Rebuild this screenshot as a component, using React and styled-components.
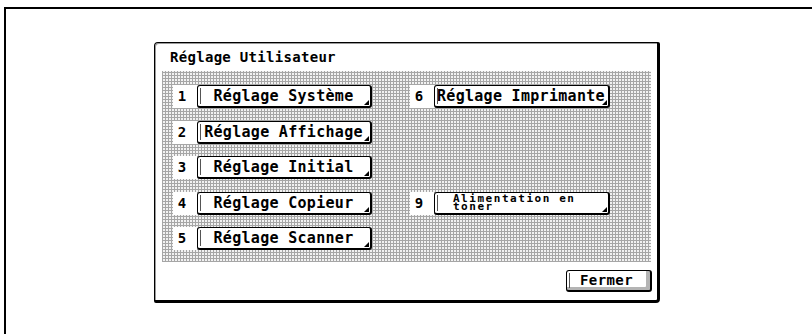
import React from 'react'
import styled, { createGlobalStyle } from 'styled-components'

const Global = createGlobalStyle`
  html, body {
    margin: 0;
    padding: 0;
    background: #fff;
  }
  body {
    font-family: "DejaVu Sans Mono", "Liberation Mono", monospace;
    color: #000;
  }
`

const Page = styled.div`
  width: 812px;
  height: 334px;
  box-sizing: border-box;
  padding: 7px 0 0 4px;
  overflow: hidden;
`

const Frame = styled.div`
  height: 327px;
  box-sizing: border-box;
  border-top: 2px solid #000;
  border-left: 2px solid #000;
  padding: 33px 0 0 148px;
`

const Dialog = styled.div`
  width: 506px;
  height: 261px;
  box-sizing: border-box;
  border: 1px solid #000;
  border-right-width: 3px;
  border-bottom-width: 3px;
  border-radius: 4px 2px 4px 2px;
  box-shadow: inset 1px 1px 0 #9a9a9a;
  display: flex;
  flex-direction: column;
  background: #fff;
`

const Title = styled.div`
  height: 28px;
  line-height: 29px;
  padding-left: 15px;
  font-size: 14px;
  font-weight: bold;
  letter-spacing: 0.3px;
  white-space: nowrap;
`

const Panel = styled.div`
  margin: 0 6px 0 7px;
  height: 191px;
  box-sizing: border-box;
  padding: 14px 0 12px 11px;
  background-color: #f2f2f2;
  background-image:
    repeating-linear-gradient(0deg, #a6a6a6 0 1px, transparent 1px 3px),
    repeating-linear-gradient(90deg, #a6a6a6 0 1px, transparent 1px 3px);
  display: grid;
  grid-template-columns: 199px 200px;
  grid-auto-rows: 23px;
  column-gap: 38px;
  row-gap: 12.5px;
`

const Item = styled.div`
  display: flex;
  grid-column: ${p => p.$col};
  grid-row: ${p => p.$row};
`

const Num = styled.div`
  width: 24px;
  box-sizing: border-box;
  padding-right: 6px;
  background: #fff;
  font-weight: bold;
  font-size: 14px;
  line-height: 23px;
  text-align: center;
`

const Key = styled.button`
  position: relative;
  width: ${p => p.$w || 175}px;
  height: 23px;
  box-sizing: border-box;
  margin: 0;
  padding: 0 3px 0 2px;
  border: 1px solid #000;
  border-right-width: 2px;
  border-bottom-width: 2px;
  border-radius: 3px;
  background: #fff;
  font-family: inherit;
  font-weight: bold;
  font-size: 15px;
  letter-spacing: 0.3px;
  color: #000;
  white-space: nowrap;
  text-align: center;
  line-height: 20px;
  overflow: visible;

  &::before {
    content: "";
    position: absolute;
    left: 2px;
    top: 2px;
    bottom: 2px;
    width: 1px;
    background: #555;
  }

  &::after {
    content: "";
    position: absolute;
    right: 1px;
    bottom: 1px;
    width: 0;
    height: 0;
    border-left: 5px solid transparent;
    border-bottom: 5px solid #000;
  }
`

const SmallKey = styled(Key)`
  text-align: left;
  padding-left: 18px;
  font-size: 11px;
  letter-spacing: 1.55px;
  line-height: 8px;
  padding-top: 1px;
  white-space: normal;
`

const Footer = styled.div`
  flex: 1;
  display: flex;
  justify-content: flex-end;
  align-items: flex-start;
  padding: 8px 5px 0 0;
`

const CloseKey = styled.button`
  position: relative;
  width: 86px;
  height: 22px;
  box-sizing: border-box;
  margin: 0;
  padding: 0 4px 0 0;
  border: 1px solid #000;
  border-right-width: 2px;
  border-bottom-width: 2px;
  border-radius: 3px;
  background: #fff;
  box-shadow: inset -4px -3px 0 #b4b4b4;
  font-family: inherit;
  font-weight: bold;
  font-size: 14px;
  letter-spacing: 0.4px;
  color: #000;
  line-height: 17px;

  &::before {
    content: "";
    position: absolute;
    left: 2px;
    top: 2px;
    bottom: 2px;
    width: 1px;
    background: #555;
  }
`

const items = [
  { n: '1', label: 'Réglage Système', col: 1, row: 1 },
  { n: '2', label: 'Réglage Affichage', col: 1, row: 2 },
  { n: '3', label: 'Réglage Initial', col: 1, row: 3 },
  { n: '4', label: 'Réglage Copieur', col: 1, row: 4 },
  { n: '5', label: 'Réglage Scanner', col: 1, row: 5 },
  { n: '6', label: 'Réglage Imprimante', col: 2, row: 1, w: 177 },
]

const App = () => {
  return (
    <Page>
      <Global />
      <Frame>
        <Dialog>
          <Title>Réglage Utilisateur</Title>
          <Panel>
            {items.map(it => (
              <Item key={it.n} $col={it.col} $row={it.row}>
                <Num>{it.n}</Num>
                <Key $w={it.w}>{it.label}</Key>
              </Item>
            ))}
            <Item $col={2} $row={4}>
              <Num>9</Num>
              <SmallKey $w={177}>Alimentation en toner</SmallKey>
            </Item>
          </Panel>
          <Footer>
            <CloseKey>Fermer</CloseKey>
          </Footer>
        </Dialog>
      </Frame>
    </Page>
  )
}

export default App
